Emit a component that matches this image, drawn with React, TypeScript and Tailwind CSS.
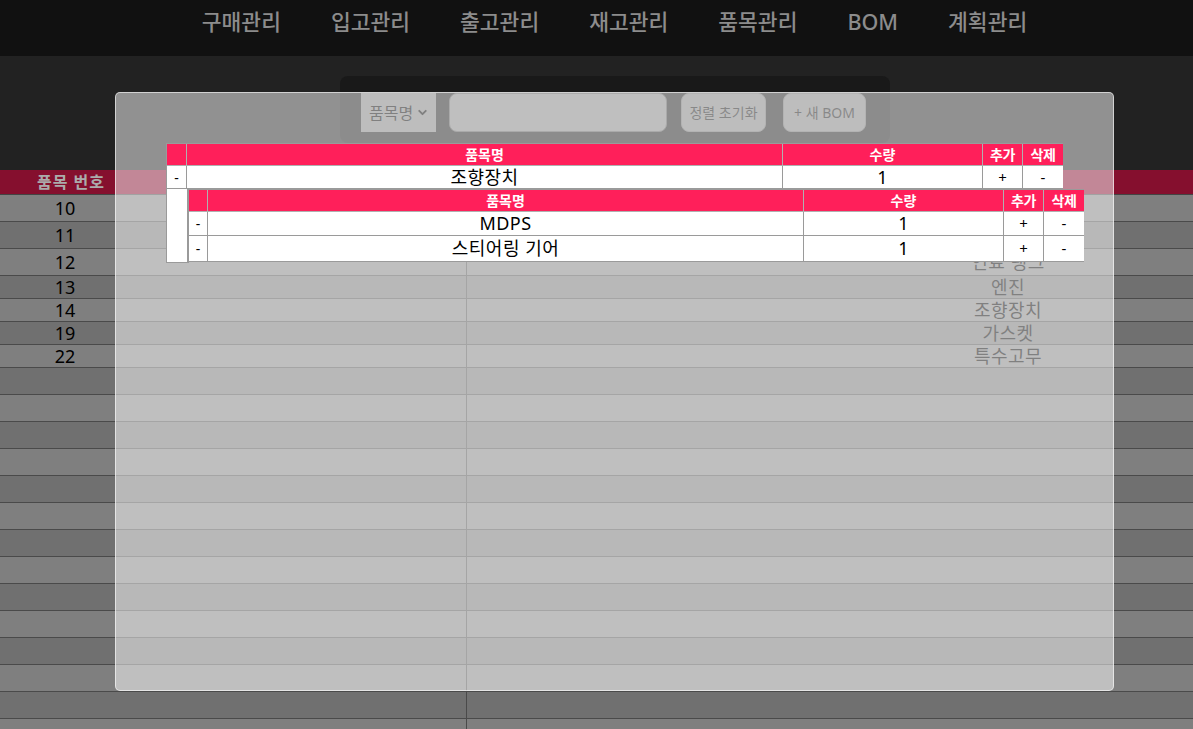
import { ChevronDown } from "lucide-react";

const NAV = ["구매관리", "입고관리", "출고관리", "재고관리", "품목관리", "BOM", "계획관리"];

type Row = { no: string; name: string; h: string };

// names of rows 10/11 sit behind the BOM popup, so they are left out
const ROWS: Row[] = [
  { no: "10", name: "", h: "h-[27px]" },
  { no: "11", name: "", h: "h-[27px]" },
  { no: "12", name: "연료 탱크", h: "h-[27px]" },
  { no: "13", name: "엔진", h: "h-[23px]" },
  { no: "14", name: "조향장치", h: "h-[23px]" },
  { no: "19", name: "가스켓", h: "h-[23px]" },
  { no: "22", name: "특수고무", h: "h-[23px]" },
  ...Array.from({ length: 14 }, () => ({ no: "", name: "", h: "h-[27px]" })),
];

const FONT = "font-['Noto_Sans','Noto_Sans_CJK_KR',sans-serif]";

function BomHeader({ first }: { first: string }) {
  return (
    <div className="flex h-[22px] bg-[#ff1f5a] text-white font-bold text-[14px] leading-[21px]">
      <div className={`${first} shrink-0 border-r border-b border-[#b0b0b0]`} />
      <div className="w-[596px] shrink-0 border-r border-b border-[#b0b0b0] text-center">품목명</div>
      <div className="w-[200px] shrink-0 border-r border-b border-[#b0b0b0] text-center">수량</div>
      <div className="w-[40px] shrink-0 border-r border-b border-[#b0b0b0] text-center tracking-[-0.5px]">추가</div>
      <div className="w-[40px] shrink-0 border-b border-[#b0b0b0] text-center tracking-[-0.5px]">삭제</div>
    </div>
  );
}

function BomRow({ first, name, h }: { first: string; name: string; h: string }) {
  return (
    <div className={`flex ${h} bg-white text-black items-stretch`}>
      <div className={`${first} shrink-0 border-r border-b border-[#9a9a9a] flex items-center justify-center text-[14px]`}>-</div>
      <div className="w-[596px] shrink-0 border-r border-b border-[#9a9a9a] flex items-center justify-center text-[18px] tracking-[0.5px]">
        {name}
      </div>
      <div className="w-[200px] shrink-0 border-r border-b border-[#9a9a9a] flex items-center justify-center text-[18px]">1</div>
      <div className="w-[40px] shrink-0 border-r border-b border-[#9a9a9a] flex items-center justify-center text-[15px]">+</div>
      <div className="w-[40px] shrink-0 border-b border-[#9a9a9a] flex items-center justify-center text-[15px]">-</div>
    </div>
  );
}

export default function App() {
  return (
    <div className={`relative h-[729px] w-[1193px] overflow-hidden bg-[#222222] ${FONT}`}>
      {/* top navigation */}
      <nav className="h-[56px] bg-[#111111] flex items-start justify-center pl-[36px] pt-[7px] gap-[50px]">
        {NAV.map((n) => (
          <span key={n} className="text-[21.5px] leading-[30px] font-medium text-[#8c8c8c]">
            {n}
          </span>
        ))}
      </nav>

      {/* search bar */}
      <div className="ml-[340px] mt-[20px] w-[550px] h-[67px] rounded-[8px] bg-[#191919] flex items-start pt-[17px] pl-[21px]">
        <div className="w-[75px] h-[39px] bg-[#7b7b7b] flex items-center pl-[8px] gap-[3px] text-[16px] text-black">
          품목명
          <ChevronDown className="w-[13px] h-[13px]" strokeWidth={3.5} />
        </div>
        <div className="ml-[13px] w-[218px] h-[39px] rounded-[8px] bg-[#7e7e7e] border border-[#555]" />
        <div className="ml-[14px] w-[85px] h-[39px] rounded-[8px] bg-[#7b7b7b] border border-[#666] flex items-center justify-center text-[14px] text-[#111]">
          정렬 초기화
        </div>
        <div className="ml-[17px] w-[83px] h-[39px] rounded-[8px] bg-[#7b7b7b] border border-[#666] flex items-center justify-center text-[14px] text-[#111]">
          + 새 BOM
        </div>
      </div>

      {/* item table */}
      <div className="mt-[27px]">
        <div className="flex h-[25px] bg-[#850f2e] border-b border-[#444] text-[16px] font-bold text-[#ababab]">
          <div className="w-[467px] border-r border-[#444] flex items-center">
            <span className="w-[142px] text-center tracking-[1px]">품목 번호</span>
          </div>
          <div className="flex-1" />
        </div>
        {ROWS.map((r, i) => (
          <div
            key={i}
            className={`flex ${r.h} border-b border-[#4a4a4a] ${i % 2 === 0 ? "bg-[#7f7f7f]" : "bg-[#707070]"}`}
          >
            <div className="w-[467px] border-r border-[#4a4a4a] flex items-center">
              <span className="w-[130px] text-center text-[18px] text-black">{r.no}</span>
            </div>
            <div className="flex-1 flex items-center">
              <span className="ml-[461px] w-[160px] text-center text-[18px] tracking-[0.5px] text-black">{r.name}</span>
            </div>
          </div>
        ))}
      </div>

      {/* BOM popup over a translucent overlay */}
      <div className="absolute left-[115px] top-[92px] w-[999px] h-[599px] rounded-[5px] bg-white/50 border border-white/60 pt-[50px] pl-[50px]">
        <div className="w-[897px] border-l border-t border-[#9a9a9a]">
          <BomHeader first="w-[20px]" />
          <BomRow first="w-[20px]" name="조향장치" h="h-[23px]" />
          <div className="flex h-[74px]">
            <div className="w-[21px] shrink-0 bg-white border-r border-b border-[#9a9a9a]" />
            <div className="w-[896px] shrink-0 border-t border-l border-[#9a9a9a]">
              <BomHeader first="w-[19px]" />
              <BomRow first="w-[19px]" name="MDPS" h="h-[24px]" />
              <BomRow first="w-[19px]" name="스티어링 기어" h="h-[26px]" />
            </div>
          </div>
        </div>
      </div>
    </div>
  );
}
